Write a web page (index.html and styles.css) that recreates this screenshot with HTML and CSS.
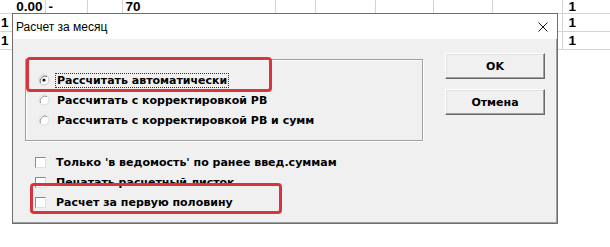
FILE: index.html
```html
<!DOCTYPE html>
<html>
<head>
<meta charset="utf-8">
<link rel="stylesheet" href="styles.css">
</head>
<body>
<div class="page">
  <table class="sheet">
    <colgroup>
      <col class="c1"><col class="c2"><col class="c3"><col class="c4"><col class="c5"><col class="c6"><col class="c7"><col class="c8"><col class="c9"><col class="c10">
    </colgroup>
    <tr class="r1">
      <td class="num">0.00</td><td class="txt">-</td><td></td><td class="txt">70</td><td></td><td></td><td></td><td></td><td></td><td class="txt one">1</td>
    </tr>
    <tr class="r2">
      <td class="txt lone">1</td><td></td><td></td><td></td><td></td><td></td><td></td><td></td><td></td><td class="txt one">1</td>
    </tr>
    <tr class="r2">
      <td class="txt lone">1</td><td></td><td></td><td></td><td></td><td></td><td></td><td></td><td></td><td class="txt one">1</td>
    </tr>
  </table>

  <div class="dialog">
    <div class="titlebar">
      <span class="title">Расчет за месяц</span>
      <svg class="close" width="10" height="10" viewBox="0 0 10 10"><path d="M0.5 0.5 L9.5 9.5 M9.5 0.5 L0.5 9.5" stroke="#1a1a1a" stroke-width="1"/></svg>
    </div>
    <div class="body">
      <div class="left">
        <div class="group">
          <div class="opt">
            <svg class="radio" width="12" height="12" viewBox="0 0 12 12"><circle cx="6" cy="6" r="5" fill="#fff" stroke="#c8c8c8"/><path d="M2.5 9 A5 5 0 0 1 9 2.5" fill="none" stroke="#7a7a7a"/><circle cx="6" cy="6" r="1.6" fill="#111"/></svg>
            <span class="label focus">Рассчитать автоматически</span>
          </div>
          <div class="opt">
            <svg class="radio" width="12" height="12" viewBox="0 0 12 12"><circle cx="6" cy="6" r="5" fill="#fff" stroke="#dcdcdc"/><path d="M2.5 9 A5 5 0 0 1 9 2.5" fill="none" stroke="#9a9a9a"/></svg>
            <span class="label">Рассчитать с корректировкой РВ</span>
          </div>
          <div class="opt">
            <svg class="radio" width="12" height="12" viewBox="0 0 12 12"><circle cx="6" cy="6" r="5" fill="#fff" stroke="#dcdcdc"/><path d="M2.5 9 A5 5 0 0 1 9 2.5" fill="none" stroke="#9a9a9a"/></svg>
            <span class="label">Рассчитать с корректировкой РВ и сумм</span>
          </div>
        </div>
        <div class="checks">
          <div class="opt">
            <span class="check"></span>
            <span class="label">Только 'в ведомость' по ранее введ.суммам</span>
          </div>
          <div class="opt">
            <span class="check"></span>
            <span class="label">Печатать расчетный листок</span>
          </div>
          <div class="opt">
            <span class="check"></span>
            <span class="label">Расчет за первую половину</span>
          </div>
        </div>
      </div>
      <div class="buttons">
        <div class="btn">OK</div>
        <div class="btn">Отмена</div>
      </div>
    </div>
    <div class="mark mark1"></div>
    <div class="mark mark2"></div>
  </div>
</div>
</body>
</html>
```

FILE: styles.css
```css
html, body {
  margin: 0;
  padding: 0;
  background: #ffffff;
}
.page {
  position: relative;
  width: 610px;
  height: 247px;
  overflow: hidden;
  font-family: "Liberation Sans", Arial, sans-serif;
}
.sheet {
  border-collapse: collapse;
  table-layout: fixed;
  width: 610px;
}
.sheet td {
  border-right: 1px solid #d4d4d4;
  border-bottom: 1px solid #d4d4d4;
  padding: 0;
  font-weight: bold;
  font-size: 13.5px;
  color: #000;
  white-space: nowrap;
  vertical-align: top;
}
.sheet td:last-child { border-right: none; }
.c1 { width: 45px; }
.c2 { width: 42px; }
.c3 { width: 35px; }
.c4 { width: 153px; }
.c5 { width: 40px; }
.c6 { width: 60px; }
.c7 { width: 58px; }
.c8 { width: 59px; }
.c9 { width: 70px; }
.c10 { width: 48px; }
.r1 td { height: 12px; line-height: 12px; padding-top: 1px; }
.r2 td { height: 16px; line-height: 17px; }
.sheet td.num { text-align: right; padding-right: 2px; }
.sheet td.txt { padding-left: 3px; }
.sheet td.lone { padding-left: 1px; }
.sheet td.one { padding-left: 6px; }

.dialog {
  position: absolute;
  left: 12px;
  top: 13px;
  width: 544px;
  height: 209px;
  border: 1px solid #6e6e6e;
  background: #f0f0f0;
  display: flex;
  flex-direction: column;
}
.titlebar {
  height: 25px;
  background: #ffffff;
  display: flex;
  align-items: center;
  justify-content: space-between;
  padding: 0 9px 0 3px;
}
.title {
  font-family: "Liberation Sans", Arial, sans-serif;
  font-size: 12px;
  color: #000;
  padding-top: 1px;
}
.close { display: block; margin-top: 1px; }
.body {
  flex: 1;
  display: flex;
  padding: 20px 0 0 12px;
  box-shadow: inset -1px -1px 0 #a0a0a0;
}
.left {
  width: 398px;
  display: flex;
  flex-direction: column;
}
.group {
  border: 1px solid #a0a0a0;
  box-shadow: inset 1px 1px 0 #ffffff, 1px 1px 0 #ffffff;
  padding-top: 10px;
  height: 60px;
  padding-bottom: 10px;
}
.opt {
  height: 20px;
  display: flex;
  align-items: center;
  padding-left: 12px;
}
.checks {
  padding-top: 11px;
}
.checks .opt { padding-left: 10px; }
.radio { display: block; flex: none; margin-right: 5px; }
.check {
  width: 9px;
  height: 9px;
  flex: none;
  background: #fff;
  border-top: 1px solid #8a8a8a;
  border-left: 1px solid #8a8a8a;
  border-right: 1px solid #e0e0e0;
  border-bottom: 1px solid #e0e0e0;
  margin-right: 8px;
}
.label {
  font-family: "DejaVu Sans", Verdana, sans-serif;
  font-weight: bold;
  font-size: 11px;
  color: #000;
  line-height: 13px;
  padding: 0 1px;
  border: 1px solid transparent;
}
.label.focus {
  border: 1px dotted #333;
}
.buttons {
  margin-left: 22px;
  display: flex;
  flex-direction: column;
  gap: 10px;
  margin-top: -6px;
}
.btn {
  width: 96px;
  height: 22px;
  border-top: 1px solid #ffffff;
  border-left: 1px solid #ffffff;
  border-right: 1px solid #696969;
  border-bottom: 1px solid #696969;
  box-shadow: inset -1px -1px 0 #a0a0a0, inset 1px 1px 0 #e3e3e3;
  padding: 1px;
  display: flex;
  align-items: center;
  justify-content: center;
  font-family: "DejaVu Sans", Verdana, sans-serif;
  font-weight: bold;
  font-size: 11px;
  color: #000;
}
.mark {
  position: absolute;
  border: 3px solid #d9343c;
  border-radius: 4px;
}
.mark1 { left: 13px; top: 43px; width: 240px; height: 29px; }
.mark2 { left: 17px; top: 169px; width: 246px; height: 25px; }
```
